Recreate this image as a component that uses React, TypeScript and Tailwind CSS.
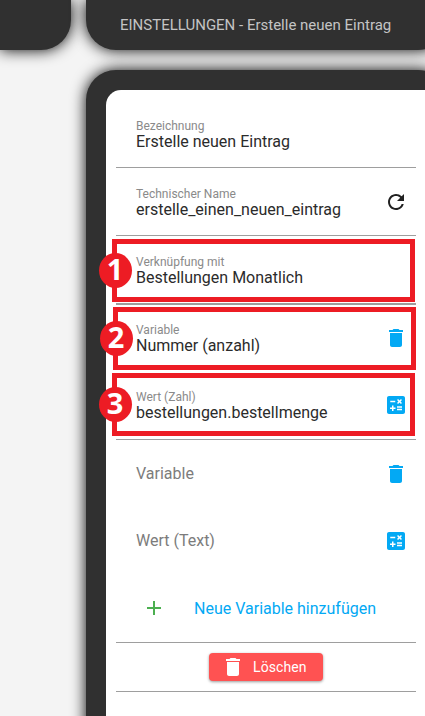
import type { ReactNode } from "react";
import { MdAdd, MdCalculate, MdDelete, MdRefresh } from "react-icons/md";

type FieldProps = { label: string; value: string; className: string; children?: ReactNode };

function Field({ label, value, className, children }: FieldProps) {
  return (
    <div className={`relative flex items-start justify-between pr-2 pl-5 ${className}`}>
      <div>
        <div className="text-xs leading-4 text-[#8a8a8a]">{label}</div>
        <div className="text-base leading-4 text-[#2b2b2b]">{value}</div>
      </div>
      {children}
    </div>
  );
}

function EmptyField({ label, className, children }: { label: string; className: string; children: ReactNode }) {
  return (
    <div className={`flex items-center justify-between pr-2 pl-5 ${className}`}>
      <span className="text-base leading-6 text-[#7c7c7c]">{label}</span>
      {children}
    </div>
  );
}

function Marker({ n, className }: { n: number; className: string }) {
  return (
    <div className={`pointer-events-none absolute h-[63px] w-[303px] border-5 border-[#ed1c24] ${className}`}>
      <div className="absolute top-[9px] -left-[18px] flex h-[35px] w-[33px] items-center justify-center rounded-[50%] bg-[#ed1c24] pr-px pb-[4px] font-['Open_Sans',sans-serif] text-[29px] leading-none font-bold text-white">
        {n}
      </div>
    </div>
  );
}

export default function App() {
  return (
    <div className="flex h-[716px] w-[425px] flex-col gap-5 overflow-hidden bg-[#f4f4f4] font-[Roboto,sans-serif]">
      <div className="flex h-[50px] shrink-0 gap-[15px]">
        <div className="w-[71px] shrink-0 rounded-br-[30px] bg-[#303030] shadow-[0_0_15px_#000000]" />
        <header className="flex w-[362px] shrink-0 items-center rounded-b-[30px] bg-[#303030] pl-[34px] text-[15px] whitespace-nowrap text-[#c4c4c4] shadow-[0_0_15px_#000000]">
          EINSTELLUNGEN - Erstelle neuen Eintrag
        </header>
      </div>
      <main className="ml-[86px] flex h-[700px] w-[362px] shrink-0 rounded-t-[30px] bg-[#303030] pt-5 pl-5 shadow-[0_0_15px_#000000]">
        <div className="flex w-[342px] flex-col rounded-tl-[15px] bg-white pt-2.5 pl-2.5">
          <div className="flex w-[300px] flex-col">
            <Field label="Bezeichnung" value="Erstelle neuen Eintrag" className="h-[68px] border-b border-[#9e9e9e] pt-[18px]" />
            <Field label="Technischer Name" value="erstelle_einen_neuen_eintrag" className="h-[68px] border-b border-[#9e9e9e] pt-[18px]">
              <MdRefresh className="mt-1 size-6 text-[#212121]" />
            </Field>
            <Field label="Verknüpfung mit" value="Bestellungen Monatlich" className="h-[69px] border-b-2 border-[#9e9e9e] pt-[18px]">
              <Marker n={1} className="top-[3px] -left-1" />
            </Field>
            <Field label="Variable" value="Nummer (anzahl)" className="h-[67px] pt-[17px]">
              <MdDelete className="mt-1 size-6 text-[#03a9f4]" />
              <Marker n={2} className="top-[2px] -left-[3px]" />
            </Field>
            <Field label="Wert (Zahl)" value="bestellungen.bestellmenge" className="h-[68px] border-b border-[#9e9e9e] pt-[17px]">
              <MdCalculate className="mt-1 size-6 text-[#03a9f4]" />
              <Marker n={3} className="top-[1px] -left-1" />
            </Field>
            <EmptyField label="Variable" className="h-[67px]">
              <MdDelete className="size-6 text-[#03a9f4]" />
            </EmptyField>
            <EmptyField label="Wert (Text)" className="h-[68px]">
              <MdCalculate className="size-6 text-[#03a9f4]" />
            </EmptyField>
            <button className="flex h-[68px] items-center gap-7 border-b border-[#9e9e9e] pl-[26px] text-base text-[#03a9f4]">
              <MdAdd className="mb-[1px] size-6 text-[#4caf50]" />
              Neue Variable hinzufügen
            </button>
            <div className="flex h-[49px] items-center justify-center border-b border-[#9e9e9e]">
              <button className="flex h-7 w-[114px] items-center gap-2 rounded bg-[#ff5252] pl-3 text-sm tracking-[0.1px] text-white shadow-[0_1px_3px_rgba(0,0,0,0.4)]">
                <MdDelete className="size-6" />
                Löschen
              </button>
            </div>
          </div>
        </div>
      </main>
    </div>
  );
}
